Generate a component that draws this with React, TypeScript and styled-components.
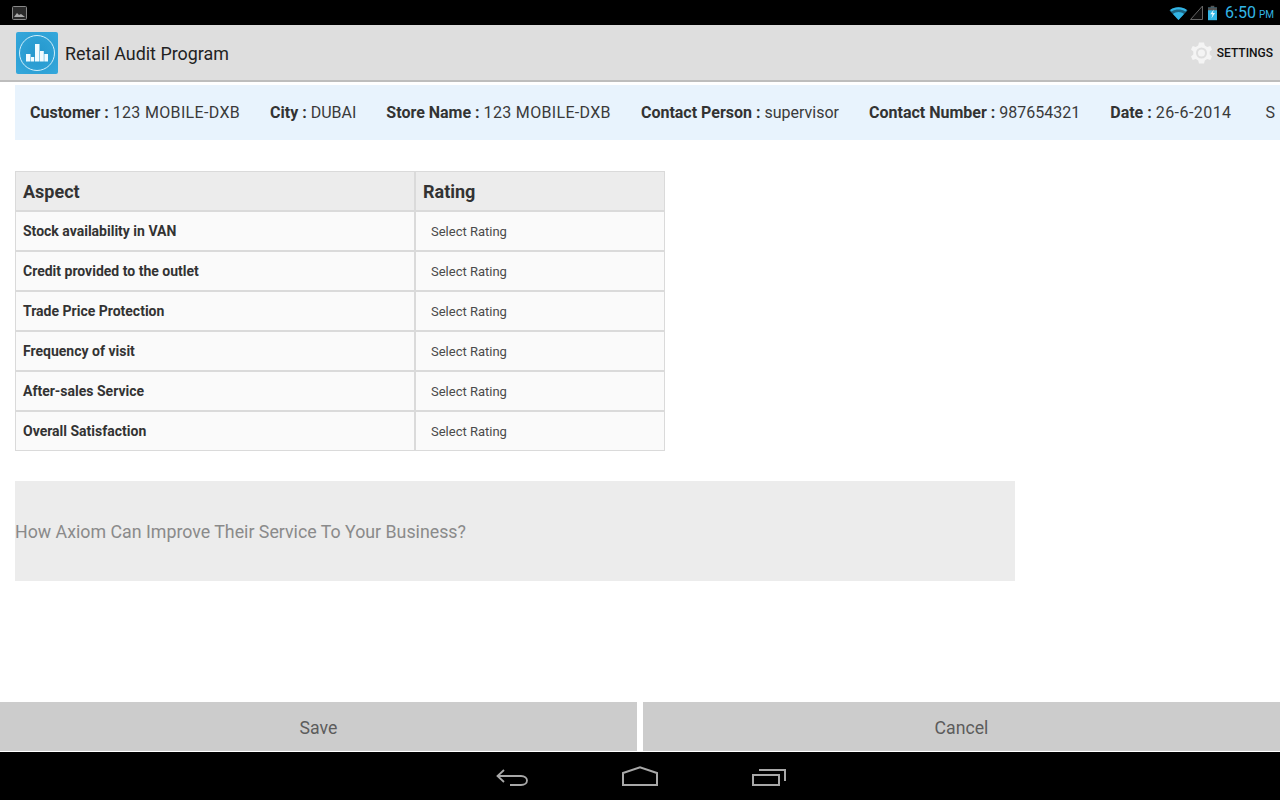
import React from 'react';
import styled, { createGlobalStyle } from 'styled-components';

const Global = createGlobalStyle`
  html, body { margin: 0; padding: 0; background: #fff; }
  body { font-family: Roboto, "Noto Sans", sans-serif; overflow: hidden; }
`;
const Screen = styled.div`
  width: 1280px; height: 800px; display: flex; flex-direction: column; background: #fff; overflow: hidden;
`;
const StatusBar = styled.div`
  height: 25px; flex: none; background: #000; display: flex; align-items: center; justify-content: space-between;
  padding: 0 6px 0 12px;
`;
const StatusRight = styled.div`display: flex; align-items: center;`;
const SignalIcon = styled.svg`margin-left: 2px;`;
const BatteryIcon = styled.svg`margin-left: 5px;`;
const Clock = styled.span`
  color: #33b5e5; font-size: 16px; margin-left: 8px; line-height: 25px; padding-top: 1px;
`;
const Meridiem = styled.span`font-size: 10px; margin-left: 3px;`;
const ActionBar = styled.header`
  height: 55px; flex: none; background: #dedede; border-bottom: 2px solid #bdbdbd; display: flex; align-items: center;
  justify-content: space-between; padding: 0 7px 0 16px;
`;
const Brand = styled.div`display: flex; align-items: center; gap: 7px;`;
const Title = styled.h1`margin: 0; padding-top: 2px; font-size: 17.9px; font-weight: 400; color: #222;`;
const SettingsAction = styled.div`
  display: flex; align-items: center; gap: 5px; font-size: 12px; font-weight: 500; color: #111;
`;
const InfoBar = styled.div`
  flex: none; height: 55px; margin: 3px 0 0 15px; background: #e8f3fd; display: flex; align-items: center; gap: 30px;
  padding-left: 15px; overflow: hidden; white-space: nowrap; font-size: 16px; color: #3a3a3a;
`;
const Info = styled.span`flex: none;`;
const InfoLabel = styled.b`font-weight: 700; color: #333;`;
const InfoValue = styled.span<{ $tracking: number }>`letter-spacing: ${p => p.$tracking}px;`;
const InfoOverflow = styled.span`flex: none; margin-left: 4px;`;
const Content = styled.main`
  flex: 1; display: flex; flex-direction: column; align-items: flex-start; padding: 31px 0 0 15px;
`;
const Table = styled.div`
  display: grid; grid-template-columns: 400px 250px; width: 650px;
`;
const Cell = styled.div<{ $head?: boolean; $right?: boolean }>`
  height: 40px; box-sizing: border-box; display: flex; align-items: center;
  border: 1px solid #dadada;
  padding-left: ${p => (p.$right && !p.$head ? 15 : 7)}px;
  background: ${p => (p.$head ? '#ececec' : '#fafafa')};
  color: ${p => (p.$right && !p.$head ? '#4a4a4a' : '#333')};
  font-size: ${p => (p.$head ? 18 : p.$right ? 13 : 14)}px;
  font-weight: ${p => (p.$right && !p.$head ? 400 : 700)};
`;
const Feedback = styled.div`
  margin-top: 30px; width: 1000px; height: 100px; background: #ececec; display: flex; align-items: center;
  color: #8a8a8a; font-size: 17.8px;
`;
const Footer = styled.div`
  flex: none; display: flex; gap: 6px; height: 49px; margin-bottom: 1px;
`;
const FooterButton = styled.button`
  flex: 1; border: 0; background: #cccccc; color: #5c5c5c; font: 400 17.7px Roboto, sans-serif; padding: 2px 0 0;
`;
const NavBar = styled.nav`
  flex: none; height: 48px; background: #000; display: flex; align-items: center; justify-content: center; gap: 94px;
  padding-left: 2px;
`;

const rows = ['Stock availability in VAN', 'Credit provided to the outlet', 'Trade Price Protection', 'Frequency of visit', 'After-sales Service', 'Overall Satisfaction'];
const info: [string, string, number][] = [
  ['Customer', '123 MOBILE-DXB', 0.33], ['City', 'DUBAI', 0], ['Store Name', '123 MOBILE-DXB', 0.33],
  ['Contact Person', 'supervisor', 0], ['Contact Number', '987654321', 0], ['Date', '26-6-2014', 0.45],
];

const Logo = () => (
  <svg width="42" height="42" viewBox="0 0 42 42">
    <defs>
      <radialGradient id="lg" cx="0.5" cy="0.5" r="0.7">
        <stop offset="0" stopColor="#2497cc" /><stop offset="1" stopColor="#35a8dc" />
      </radialGradient>
    </defs>
    <rect width="42" height="42" rx="2" fill="url(#lg)" />
    <circle cx="21" cy="21" r="17.5" fill="none" stroke="#cfeefa" strokeWidth="1" />
    <g fill="#f0fbff">
      <rect x="10" y="22" width="4.5" height="7.5" />
      <rect x="15" y="25" width="3.2" height="4.5" />
      <rect x="19" y="12" width="4.5" height="17.5" />
      <rect x="24" y="19" width="3.8" height="10.5" />
      <rect x="28.3" y="22" width="3.7" height="7.5" />
    </g>
  </svg>
);

export default function App() {
  return (
    <Screen>
      <Global />
      <StatusBar>
        <svg width="15" height="14" viewBox="0 0 15 14">
          <rect x="0.5" y="0.5" width="14" height="13" rx="1" fill="#2a2a2a" stroke="#888" />
          <path d="M2 11 L5 7 L7 9 L9 8 L13 11 Z" fill="#aaa" />
        </svg>
        <StatusRight>
          <svg width="19" height="14" viewBox="0 0 20 14.5">
            <path d="M10 14.5 L0.5 4.5 C5.5 0 14.5 0 19.5 4.5 Z" fill="#1c6684" />
            <path d="M10 14.5 L4.2 8.4 C7.5 5.6 12.5 5.6 15.8 8.4 Z" fill="#33b5e5" />
            <path d="M1.2 4 C6 0.4 14 0.4 18.8 4 L17.2 5.7 C13 2.9 7 2.9 2.8 5.7 Z" fill="#33b5e5" />
          </svg>
          <SignalIcon width="13" height="15" viewBox="0 0 13 15">
            <path d="M12.5 1 V14.5 H0.5 Z" fill="#0d0d0d" stroke="#666" strokeWidth="1" />
          </SignalIcon>
          <BatteryIcon width="9" height="16" viewBox="0 0 10 16">
            <rect x="3" y="0" width="4" height="2" fill="#555" />
            <rect x="0" y="2" width="10" height="14" fill="#33b5e5" />
            <rect x="0" y="2" width="10" height="3" fill="#555" />
            <path d="M6.5 4 L2.5 9.5 H5 L3.8 14 L7.8 8 H5.2 Z" fill="#e8f8ff" />
          </BatteryIcon>
          <Clock>6:50<Meridiem>PM</Meridiem></Clock>
        </StatusRight>
      </StatusBar>
      <ActionBar>
        <Brand>
          <Logo />
          <Title>Retail Audit Program</Title>
        </Brand>
        <SettingsAction>
          <svg width="21" height="22" viewBox="0 0 21 22">
            <path fillRule="evenodd" fill="#f4f4f4" d="M8 0.5 H13 L13.8 3.6 L16.2 5 L19.3 4.1 L21 7.5 L18.7 9.6 V12.4 L21 14.5 L19.3 17.9 L16.2 17 L13.8 18.4 L13 21.5 H8 L7.2 18.4 L4.8 17 L1.7 17.9 L0 14.5 L2.3 12.4 V9.6 L0 7.5 L1.7 4.1 L4.8 5 L7.2 3.6 Z M10.5 5.5 A5.5 5.5 0 1 0 10.5 16.5 A5.5 5.5 0 1 0 10.5 5.5 Z M10.5 7.5 A3.5 3.5 0 1 1 10.5 14.5 A3.5 3.5 0 1 1 10.5 7.5 Z" />
          </svg>
          SETTINGS
        </SettingsAction>
      </ActionBar>
      <InfoBar>
        {info.map(([k, v, t]) => (
          <Info key={k}><InfoLabel>{k} : </InfoLabel><InfoValue $tracking={t}>{v}</InfoValue></Info>
        ))}
        <InfoOverflow>S</InfoOverflow>
      </InfoBar>
      <Content>
        <Table>
          <Cell $head>Aspect</Cell>
          <Cell $head $right>Rating</Cell>
          {rows.map(r => (
            <React.Fragment key={r}>
              <Cell>{r}</Cell>
              <Cell $right>Select Rating</Cell>
            </React.Fragment>
          ))}
        </Table>
        <Feedback>How Axiom Can Improve Their Service To Your Business?</Feedback>
      </Content>
      <Footer>
        <FooterButton>Save</FooterButton>
        <FooterButton>Cancel</FooterButton>
      </Footer>
      <NavBar>
        <svg width="32" height="20" viewBox="0 0 32 20" fill="none" stroke="#a8a8a8" strokeWidth="1.8">
          <path d="M8 4 L1.5 10 L8 16" /><path d="M1.5 10 H25 C33 10 33 19 25 19 H14" />
        </svg>
        <svg width="36" height="20" viewBox="0 0 36 20" fill="none" stroke="#a8a8a8" strokeWidth="2">
          <path d="M1 19 V7 L18 1.2 L35 7 V19 Z" />
        </svg>
        <svg width="34" height="20" viewBox="0 0 34 20" fill="none" stroke="#a8a8a8" strokeWidth="2">
          <rect x="1" y="9" width="26" height="10" /><path d="M8 5 V4 H33 V15" />
        </svg>
      </NavBar>
    </Screen>
  );
}
